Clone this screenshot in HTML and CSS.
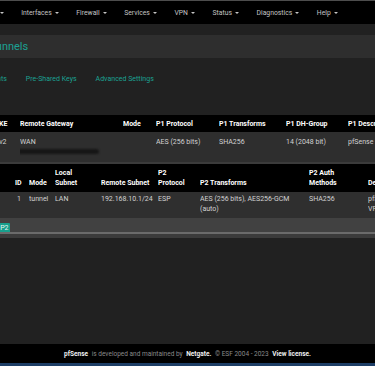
FILE: index.html
```html
<!DOCTYPE html>
<html lang="en">
<head>
    <meta charset="UTF-8">
    <meta name="viewport" content="width=device-width, initial-scale=1.0">
    <title>VPN: IPsec: Tunnels</title>
    <link rel="stylesheet" href="styles.css">
</head>
<body>
    <nav class="navbar">
        <ul class="menu">
            <li>System <span class="caret"></span></li>
            <li>Interfaces <span class="caret"></span></li>
            <li>Firewall <span class="caret"></span></li>
            <li>Services <span class="caret"></span></li>
            <li>VPN <span class="caret"></span></li>
            <li>Status <span class="caret"></span></li>
            <li>Diagnostics <span class="caret"></span></li>
            <li>Help <span class="caret"></span></li>
        </ul>
    </nav>

    <main class="pagina">
        <div class="cabecera">
            <h1 class="migas">VPN / IPsec / Tunnels</h1>
        </div>

        <ul class="pestanas">
            <li>Tunnels</li>
            <li>Mobile Clients</li>
            <li>Pre-Shared Keys</li>
            <li>Advanced Settings</li>
        </ul>

        <div class="panel">
            <table class="tabla fase1">
                <colgroup>
                    <col style="width:23px"><col style="width:103px"><col style="width:33px">
                    <col style="width:63px"><col style="width:67px"><col style="width:62px"><col style="width:90px">
                </colgroup>
                <thead>
                    <tr>
                        <th>IKE</th>
                        <th>Remote Gateway</th>
                        <th>Mode</th>
                        <th>P1 Protocol</th>
                        <th>P1 Transforms</th>
                        <th>P1 DH-Group</th>
                        <th>P1 Description</th>
                    </tr>
                </thead>
                <tbody>
                    <tr>
                        <td class="ike">IKEv2</td>
                        <td>WAN<br><span class="tapado"></span></td>
                        <td></td>
                        <td>AES (256 bits)</td>
                        <td>SHA256</td>
                        <td>14 (2048 bit)</td>
                        <td>pfSense</td>
                    </tr>
                </tbody>
            </table>

            <div class="fase2">
                <table class="tabla sub">
                    <colgroup>
                        <col style="width:15px"><col style="width:14px"><col style="width:26px">
                        <col style="width:46px"><col style="width:57px"><col style="width:42px">
                        <col style="width:109px"><col style="width:59px"><col style="width:70px">
                    </colgroup>
                    <thead>
                        <tr>
                            <th></th>
                            <th>ID</th>
                            <th>Mode</th>
                            <th>Local<br>Subnet</th>
                            <th>Remote Subnet</th>
                            <th>P2<br>Protocol</th>
                            <th>P2 Transforms</th>
                            <th>P2 Auth<br>Methods</th>
                            <th>Description</th>
                        </tr>
                    </thead>
                    <tbody>
                        <tr>
                            <td></td>
                            <td class="centro">1</td>
                            <td>tunnel</td>
                            <td>LAN</td>
                            <td>192.168.10.1/24</td>
                            <td>ESP</td>
                            <td>AES (256 bits), AES256-GCM<br>(auto)</td>
                            <td>SHA256</td>
                            <td>pfSense<br>VPN</td>
                        </tr>
                    </tbody>
                </table>
                <div class="pie-fase2">
                    <button class="boton-p2">Add P2</button>
                </div>
            </div>
        </div>
    </main>

    <footer class="pie">
        <b>pfSense</b> is developed and maintained by <b>Netgate.</b> &copy; ESF 2004 - 2023 <b>View license.</b>
    </footer>
</body>
</html>
```

FILE: styles.css
```css
html, body {
    height: 100%;
}

body {
    margin: 0;
    display: flex;
    flex-direction: column;
    background-color: #212121;
    font-family: Roboto, "Liberation Sans", sans-serif;
    font-size: 7px;
    color: #d2d2d2;
    overflow: hidden;
}

.navbar {
    background-color: #000;
    border-top: 1px solid #4d4d4d;
    height: 23px;
    display: flex;
    align-items: center;
    flex-shrink: 0;
}

.menu {
    list-style: none;
    margin: 0 0 0 -26px;
    padding: 0;
    display: flex;
    gap: 17.6px;
    white-space: nowrap;
    color: #c4c4c4;
    font-size: 6.8px;
}

.menu li {
    display: flex;
    align-items: center;
    gap: 3px;
}

.caret {
    width: 0;
    height: 0;
    border-left: 2.5px solid transparent;
    border-right: 2.5px solid transparent;
    border-top: 2.5px solid #c4c4c4;
}

.pagina {
    flex: 1;
    padding-top: 11px;
}

.cabecera {
    background-color: #2e2e2e;
    height: 23px;
    display: flex;
    align-items: center;
    overflow: hidden;
}

.migas {
    margin: 0;
    font-size: 11px;
    font-weight: normal;
    color: #1ba193;
    white-space: nowrap;
    text-indent: -79px;
}

.pestanas {
    list-style: none;
    margin: 0 0 0 -81px;
    padding: 0;
    height: 42px;
    display: flex;
    align-items: center;
    gap: 19px;
    white-space: nowrap;
    color: #1ba193;
}

.panel {
    margin-top: 15px;
}

.tabla {
    border-collapse: collapse;
    table-layout: fixed;
    white-space: nowrap;
}

.tabla th {
    text-align: left;
    font-weight: bold;
    color: #fff;
    padding: 0;
    vertical-align: bottom;
    overflow: hidden;
}

.tabla td {
    padding: 0;
    vertical-align: top;
    overflow: hidden;
}

.fase1 {
    width: 441px;
    margin-left: -3px;
}

.fase1 .ike {
    text-indent: -8px;
    overflow: visible;
}

.fase1 thead tr {
    background-color: #000;
    height: 17px;
}

.fase1 th {
    vertical-align: middle;
}

.fase1 tbody tr {
    background-color: #2e2e2e;
    height: 30px;
}

.fase1 td {
    padding-top: 5px;
    line-height: 10px;
}

.tapado {
    display: inline-block;
    width: 85px;
    height: 5px;
    margin: 1px 0 0 -6px;
    background-color: #161616;
    border-radius: 3px;
    filter: blur(1.2px);
}

.fase2 {
    border-top: 2px solid #3b3b3b;
    border-bottom: 4px solid #3b3b3b;
}

.sub {
    width: 438px;
}

.sub thead tr {
    background-color: #000;
    height: 28px;
}

.sub th {
    line-height: 10px;
    padding-bottom: 4px;
}

.sub tbody tr {
    background-color: #2f2f2f;
    height: 26px;
}

.sub td {
    padding-top: 2px;
    line-height: 10px;
}

.sub .centro {
    padding-left: 2px;
}

.pie-fase2 {
    background-color: #414141;
    height: 16px;
    border-bottom: 2px solid #6b6b6b;
    padding-top: 5px;
    box-sizing: border-box;
    overflow: hidden;
}

.boton-p2 {
    display: block;
    margin-left: -17px;
    height: 10px;
    padding: 0 1px 0 3px;
    border: none;
    border-radius: 1px;
    background-color: #17a08d;
    color: #e8f5f2;
    font-family: Roboto, "Liberation Sans", sans-serif;
    font-size: 7px;
    line-height: 10px;
}

.pie {
    flex-shrink: 0;
    background-color: #000;
    height: 19px;
    border-bottom: 3px solid #1d3e66;
    display: flex;
    align-items: center;
    justify-content: center;
    gap: 2px;
    font-size: 6.5px;
    color: #8a8a8a;
    white-space: pre;
}

.pie b {
    color: #f0f0f0;
}
```
